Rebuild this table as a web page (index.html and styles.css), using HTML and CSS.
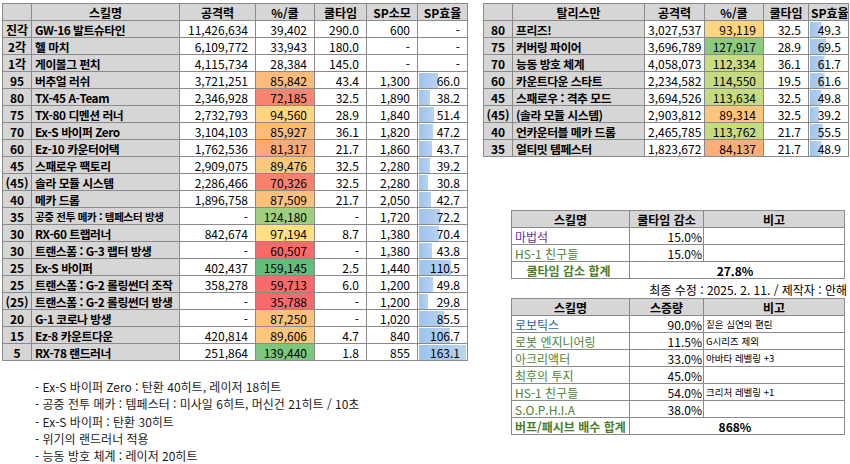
FILE: index.html
```html
<!DOCTYPE html>
<html lang="ko">
<head>
<meta charset="utf-8">
<link rel="stylesheet" href="styles.css">
</head>
<body>
<div class="page">
  <div class="left">
    <table class="grid main">
      <colgroup><col class="c-lv"><col class="c-name"><col class="c-atk"><col class="c-pct"><col class="c-cd"><col class="c-sp"><col class="c-eff"></colgroup>
      <tr class="head"><th></th><th>스킬명</th><th>공격력</th><th>%/쿨</th><th>쿨타임</th><th>SP소모</th><th>SP효율</th></tr>
      <tr><td class="lv">진각</td><td class="name">GW-16 발트슈타인</td><td class="num">11,426,634</td><td class="num">39,402</td><td class="num">290.0</td><td class="num">600</td><td class="num dash-eff">-</td></tr>
      <tr><td class="lv">2각</td><td class="name">헬 마치</td><td class="num">6,109,772</td><td class="num">33,943</td><td class="num">180.0</td><td class="num dash-sp">-</td><td class="num dash-eff">-</td></tr>
      <tr><td class="lv">1각</td><td class="name">게이볼그 펀치</td><td class="num">4,115,734</td><td class="num">28,384</td><td class="num">145.0</td><td class="num dash-sp">-</td><td class="num dash-eff">-</td></tr>
      <tr><td class="lv">95</td><td class="name">버추얼 러쉬</td><td class="num">3,721,251</td><td class="num heat" style="--bg:#fbbc7b">85,842</td><td class="num">43.4</td><td class="num">1,300</td><td class="num bar" style="--w:19px">66.0</td></tr>
      <tr><td class="lv">80</td><td class="name">TX-45 A-Team</td><td class="num">2,346,928</td><td class="num heat" style="--bg:#f8866e">72,185</td><td class="num">32.5</td><td class="num">1,890</td><td class="num bar" style="--w:11px">38.2</td></tr>
      <tr><td class="lv">75</td><td class="name">TX-80 디멘션 러너</td><td class="num">2,732,793</td><td class="num heat" style="--bg:#fed680">94,560</td><td class="num">28.9</td><td class="num">1,840</td><td class="num bar" style="--w:15px">51.4</td></tr>
      <tr><td class="lv">70</td><td class="name">Ex-S 바이퍼 Zero</td><td class="num">3,104,103</td><td class="num heat" style="--bg:#fbbc7b">85,927</td><td class="num">36.1</td><td class="num">1,820</td><td class="num bar" style="--w:14px">47.2</td></tr>
      <tr><td class="lv">60</td><td class="name">Ez-10 카운터어택</td><td class="num">1,762,536</td><td class="num heat" style="--bg:#faa977">81,317</td><td class="num">21.7</td><td class="num">1,860</td><td class="num bar" style="--w:13px">43.7</td></tr>
      <tr><td class="lv">45</td><td class="name">스패로우 팩토리</td><td class="num">2,909,075</td><td class="num heat" style="--bg:#fcc77d">89,476</td><td class="num">32.5</td><td class="num">2,280</td><td class="num bar" style="--w:11px">39.2</td></tr>
      <tr><td class="lv">(45)</td><td class="name">솔라 모듈 시스템</td><td class="num">2,286,466</td><td class="num heat" style="--bg:#f8816d">70,326</td><td class="num">32.5</td><td class="num">2,280</td><td class="num bar" style="--w:9px">30.8</td></tr>
      <tr><td class="lv">40</td><td class="name">메카 드롭</td><td class="num">1,896,758</td><td class="num heat" style="--bg:#fbc17c">87,509</td><td class="num">21.7</td><td class="num">2,050</td><td class="num bar" style="--w:12px">42.7</td></tr>
      <tr><td class="lv">35</td><td class="name small">공중 전투 메카 : 템페스터 방생</td><td class="num dash-atk">-</td><td class="num heat" style="--bg:#a0cf7f">124,180</td><td class="num dash-cd">-</td><td class="num">1,720</td><td class="num bar" style="--w:21px">72.2</td></tr>
      <tr><td class="lv">30</td><td class="name">RX-60 트랩러너</td><td class="num">842,674</td><td class="num heat" style="--bg:#ffe183">97,194</td><td class="num">8.7</td><td class="num">1,380</td><td class="num bar" style="--w:20px">70.4</td></tr>
      <tr><td class="lv">30</td><td class="name">트랜스폼 : G-3 랩터 방생</td><td class="num dash-atk">-</td><td class="num heat" style="--bg:#f86b6b">60,507</td><td class="num dash-cd">-</td><td class="num">1,380</td><td class="num bar" style="--w:13px">43.8</td></tr>
      <tr><td class="lv">25</td><td class="name">Ex-S 바이퍼</td><td class="num">402,437</td><td class="num heat" style="--bg:#63be7b">159,145</td><td class="num">2.5</td><td class="num">1,440</td><td class="num bar" style="--w:32px">110.5</td></tr>
      <tr><td class="lv">25</td><td class="name">트랜스폼 : G-2 롤링썬더 조작</td><td class="num">358,278</td><td class="num heat" style="--bg:#f86a6b">59,713</td><td class="num">6.0</td><td class="num">1,200</td><td class="num bar" style="--w:14px">49.8</td></tr>
      <tr><td class="lv">(25)</td><td class="name">트랜스폼 : G-2 롤링썬더 방생</td><td class="num dash-atk">-</td><td class="num heat" style="--bg:#f8696b">35,788</td><td class="num dash-cd">-</td><td class="num">1,200</td><td class="num bar" style="--w:9px">29.8</td></tr>
      <tr><td class="lv">20</td><td class="name">G-1 코로나 방생</td><td class="num dash-atk">-</td><td class="num heat" style="--bg:#fbc07c">87,250</td><td class="num dash-cd">-</td><td class="num">1,020</td><td class="num bar" style="--w:25px">85.5</td></tr>
      <tr><td class="lv">15</td><td class="name">Ez-8 카운트다운</td><td class="num">420,814</td><td class="num heat" style="--bg:#fcc77d">89,606</td><td class="num">4.7</td><td class="num">840</td><td class="num bar" style="--w:31px">106.7</td></tr>
      <tr><td class="lv">5</td><td class="name">RX-78 랜드러너</td><td class="num">251,864</td><td class="num heat" style="--bg:#7dc67d">139,440</td><td class="num">1.8</td><td class="num">855</td><td class="num bar" style="--w:47px">163.1</td></tr>
    </table>
    <ul class="notes">
      <li>- Ex-S 바이퍼 Zero : 탄환 40히트, 레이저 18히트</li>
      <li>- 공중 전투 메카 : 템페스터 : 미사일 6히트, 머신건 21히트 / 10초</li>
      <li>- Ex-S 바이퍼 : 탄환 30히트</li>
      <li>- 위기의 랜드러너 적용</li>
      <li>- 능동 방호 체계 : 레이저 20히트</li>
    </ul>
  </div>

  <div class="right">
    <table class="grid talisman">
      <colgroup><col class="t-lv"><col class="t-name"><col class="t-atk"><col class="t-pct"><col class="t-cd"><col class="t-eff"></colgroup>
      <tr class="head"><th></th><th>탈리스만</th><th>공격력</th><th>%/쿨</th><th>쿨타임</th><th>SP효율</th></tr>
      <tr><td class="lv">80</td><td class="name">프리즈!</td><td class="num">3,027,537</td><td class="num heat" style="--bg:#ffd67f">93,119</td><td class="num">32.5</td><td class="num bar" style="--w:11.5px">49.3</td></tr>
      <tr><td class="lv">75</td><td class="name">커버링 파이어</td><td class="num">3,696,789</td><td class="num heat" style="--bg:#8ccb7e">127,917</td><td class="num">28.9</td><td class="num bar" style="--w:16px">69.5</td></tr>
      <tr><td class="lv">70</td><td class="name">능동 방호 체계</td><td class="num">4,058,073</td><td class="num heat" style="--bg:#cadc81">112,334</td><td class="num">36.1</td><td class="num bar" style="--w:14.5px">61.7</td></tr>
      <tr><td class="lv">60</td><td class="name">카운트다운 스타트</td><td class="num">2,234,582</td><td class="num heat" style="--bg:#c3da80">114,550</td><td class="num">19.5</td><td class="num bar" style="--w:14.5px">61.6</td></tr>
      <tr><td class="lv">45</td><td class="name">스패로우 : 격추 모드</td><td class="num">3,694,526</td><td class="num heat" style="--bg:#c6db80">113,634</td><td class="num">32.5</td><td class="num bar" style="--w:11.5px">49.8</td></tr>
      <tr><td class="lv">(45)</td><td class="name">(솔라 모듈 시스템)</td><td class="num">2,903,812</td><td class="num heat" style="--bg:#fdc47d">89,314</td><td class="num">32.5</td><td class="num bar" style="--w:9px">39.2</td></tr>
      <tr><td class="lv">40</td><td class="name">언카운터블 메카 드롭</td><td class="num">2,465,785</td><td class="num heat" style="--bg:#c5db80">113,762</td><td class="num">21.7</td><td class="num bar" style="--w:13px">55.5</td></tr>
      <tr><td class="lv">35</td><td class="name">얼티밋 템페스터</td><td class="num">1,823,672</td><td class="num heat" style="--bg:#fbae78">84,137</td><td class="num">21.7</td><td class="num bar" style="--w:11.5px">48.9</td></tr>
    </table>

    <table class="grid summary cooldown">
      <colgroup><col class="s-name"><col class="s-val"><col class="s-note"></colgroup>
      <tr class="head"><th>스킬명</th><th>쿨타임 감소</th><th>비고</th></tr>
      <tr><td class="sname purple">마법석</td><td class="pct">15.0%</td><td class="note"></td></tr>
      <tr><td class="sname green">HS-1 친구들</td><td class="pct">15.0%</td><td class="note"></td></tr>
      <tr class="total"><td class="tlabel">쿨타임 감소 합계</td><td class="tval" colspan="2">27.8%</td></tr>
    </table>

    <p class="credit">최종 수정 : 2025. 2. 11. / 제작자 : 안해</p>

    <table class="grid summary buff">
      <colgroup><col class="s-name"><col class="s-val"><col class="s-note"></colgroup>
      <tr class="head"><th>스킬명</th><th>스증량</th><th>비고</th></tr>
      <tr><td class="sname blue">로보틱스</td><td class="pct">90.0%</td><td class="note">짙은 심연의 편린</td></tr>
      <tr><td class="sname green">로봇 엔지니어링</td><td class="pct">11.5%</td><td class="note">G시리즈 제외</td></tr>
      <tr><td class="sname green">아크리액터</td><td class="pct">33.0%</td><td class="note">아바타 레벨링 +3</td></tr>
      <tr><td class="sname green">최후의 투지</td><td class="pct">45.0%</td><td class="note"></td></tr>
      <tr><td class="sname green">HS-1 친구들</td><td class="pct">54.0%</td><td class="note">크리처 레벨링 +1</td></tr>
      <tr><td class="sname green">S.O.P.H.I.A</td><td class="pct">38.0%</td><td class="note"></td></tr>
      <tr class="total"><td class="tlabel">버프/패시브 배수 합계</td><td class="tval" colspan="2">868%</td></tr>
    </table>
  </div>
</div>
</body>
</html>
```

FILE: styles.css
```css
* { box-sizing: border-box; }

body {
  margin: 0;
  background: #ffffff;
  color: #000000;
  font-family: "Noto Sans CJK KR", "Noto Sans", sans-serif;
  font-size: 12px;
}

.page {
  display: flex;
  align-items: flex-start;
  padding: 3px 0 0 2px;
}

.left { width: 466px; flex: none; }
.right { width: 366px; margin-left: 15px; flex: none; }

/* ---------- generic grid ---------- */
.grid {
  border-collapse: collapse;
  table-layout: fixed;
  border: 1px solid #3a3a3a;
}

.grid th,
.grid td {
  border: 1px solid #8a8a8a;
  height: 17px;
  line-height: 15px;
  padding: 0 7px 0 3px;
  white-space: nowrap;
  overflow: hidden;
}

.grid th {
  background: #d6d6d6;
  font-weight: 700;
  text-align: center;
  padding: 0 2px;
}

.grid .lv {
  background: #d6d6d6;
  font-weight: 700;
  text-align: center;
  padding: 0;
}

.grid .name {
  background: #d6d6d6;
  font-weight: 700;
  font-size: 11.8px;
  letter-spacing: -0.45px;
  padding-left: 3px;
  padding-right: 0;
}

.grid .name.small { font-size: 10.5px; letter-spacing: -0.3px; }

.num { text-align: right; }

.heat { background: var(--bg); }

.bar {
  background-image: linear-gradient(90deg, #9ec3ea, #b7d3f1);
  background-repeat: no-repeat;
  background-size: var(--w) 15px;
  background-position: 1px center;
  padding-right: 8px;
}

.dash-atk { padding-right: 10px; }
.dash-cd  { padding-right: 14px; }
.dash-sp  { padding-right: 11px; }
.dash-eff { padding-right: 17px; }

/* main table columns */
.main { width: 465px; }
.c-lv   { width: 29px; }
.c-name { width: 148px; }
.c-atk  { width: 76px; }
.c-pct  { width: 59px; }
.c-cd   { width: 52px; }
.c-sp   { width: 51px; }
.c-eff  { width: 50px; }

/* talisman table columns */
.talisman { width: 365px; }
.t-lv   { width: 29px; }
.t-name { width: 132px; }
.t-atk  { width: 60px; }
.t-pct  { width: 59px; }
.t-cd   { width: 45px; }
.t-eff  { width: 40px; }

/* ---------- summary tables ---------- */
.summary {
  width: 333px;
  margin-left: 28px;
}

.cooldown { margin-top: 53px; }

.s-name { width: 118px; }
.s-val  { width: 74px; }
.s-note { width: 141px; }

.summary .sname { padding-left: 3px; }
.summary .pct { text-align: right; padding: 0 1px 0 0; }
.summary .note { font-size: 9.5px; padding-left: 2px; }

.purple { color: #7030a0; }
.green  { color: #4f8430; }
.blue   { color: #2f5d9c; }

.total td { border-top: 1px solid #3a3a3a; }
.tlabel {
  color: #4a7d27;
  font-weight: 700;
  text-align: center;
}
.tval {
  font-weight: 700;
  text-align: center;
}

.credit {
  margin: 2px 0 0;
  height: 17px;
  line-height: 17px;
  text-align: right;
  padding-right: 2px;
}

/* ---------- notes ---------- */
.notes {
  list-style: none;
  margin: 17px 0 0;
  padding: 0 0 0 33px;
  color: #1a1a1a;
}

.notes li {
  line-height: 17.3px;
}
```
